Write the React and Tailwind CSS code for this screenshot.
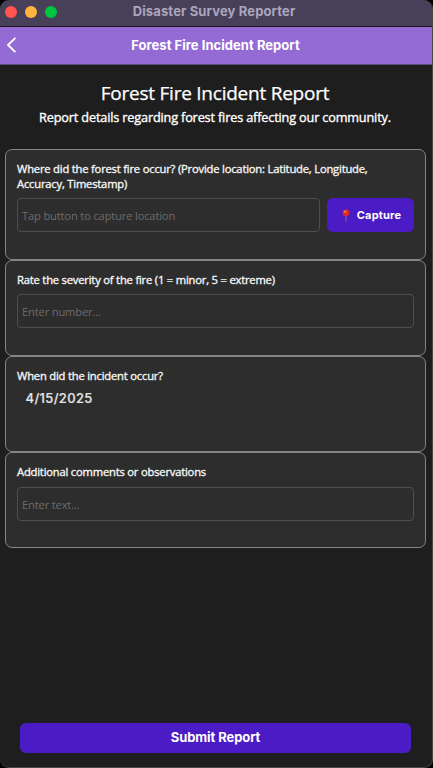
const openSans = "font-['Open_Sans',sans-serif]";
const inter = "font-['Inter',sans-serif]";

function Pin() {
  return (
    <svg className="h-[13px] w-[8px] shrink-0" viewBox="0 0 8 13" fill="none">
      <path d="M4 6v6.4" stroke="#7c6a8a" strokeWidth="1.1" />
      <circle cx="4" cy="3.8" r="3.4" fill="#d92d20" />
      <circle cx="3.2" cy="2.8" r="1.2" fill="#f5705f" />
    </svg>
  );
}

function Card({ label, height, children }) {
  return (
    <section className={`${height} shrink-0 rounded-[7px] border border-[#858585] bg-[#2d2d2d] px-[11px] pt-[11px]`}>
      <h2 className={`${openSans} text-[11.2px] leading-[15px] tracking-[-0.19px] whitespace-nowrap text-[#f5f5f5] [-webkit-text-stroke:0.35px_#f5f5f5]`}>{label}</h2>
      {children}
    </section>
  );
}

function Field({ placeholder }) {
  return (
    <div className={`${openSans} flex h-[34px] min-w-0 flex-1 items-center rounded-[4px] border border-[#4e4e4e] px-[4px] pt-[2px] text-[11.2px] tracking-[-0.18px] text-[#6c6c6c]`}>
      {placeholder}
    </div>
  );
}

export default function App() {
  return (
    <div className="h-[768px] w-[433px] overflow-hidden bg-black">
      <div className="flex h-full flex-col overflow-hidden rounded-[9px] border-r border-b border-[#484848] bg-[#1e1e1e]">
        <header className="relative flex h-[26px] shrink-0 items-center justify-center bg-[#474058] pr-[4px] pb-[2px]">
          <div className="absolute top-[6px] left-[5px] flex gap-[8px]">
            <span className="size-[12px] rounded-full bg-[#ff5450]" />
            <span className="size-[12px] rounded-full bg-[#ffb53d]" />
            <span className="size-[12px] rounded-full bg-[#00c63f]" />
          </div>
          <span className={`${inter} text-[13px] font-bold tracking-[0.14px] text-[#ada5bf]`}>Disaster Survey Reporter</span>
        </header>
        <nav className="relative flex h-[39px] shrink-0 items-center justify-center border-t border-b border-t-[#191520] border-b-[#605078] bg-[#946bd5] pr-px">
          <svg className="absolute top-[10px] left-[6px] h-[16px] w-[11px]" viewBox="0 0 11 16" fill="none">
            <path d="M8.9 1.3 2 8l6.9 6.7" stroke="white" strokeWidth="1.8" strokeLinecap="round" strokeLinejoin="round" />
          </svg>
          <span className={`${inter} text-[13px] font-bold tracking-[0.04px] text-white`}>Forest Fire Incident Report</span>
        </nav>
        <div className="flex h-[84px] shrink-0 flex-col items-center pt-[14px] pr-[2px] text-white">
          <h1 className={`${openSans} text-[19px] leading-[28px] tracking-[-0.24px] whitespace-nowrap [-webkit-text-stroke:0.25px_white]`}>Forest Fire Incident Report</h1>
          <p className={`${openSans} text-[12.7px] leading-[20px] tracking-[-0.16px] whitespace-nowrap [-webkit-text-stroke:0.35px_white]`}>Report details regarding forest fires affecting our community.</p>
        </div>
        <main className="ml-[5px] flex w-[421px] flex-col">
          <Card height="h-[111px]" label={<>Where did the forest fire occur? (Provide location: Latitude, Longitude,<br />Accuracy, Timestamp)</>}>
            <div className="mt-[7px] flex gap-[7px]">
              <Field placeholder="Tap button to capture location" />
              <button className={`${inter} flex h-[34px] w-[87px] items-center justify-center gap-[7px] rounded-[6px] bg-[#4b1bc6] pt-px pl-[2px] text-[11px] font-bold tracking-[0.2px] text-white`}>
                <Pin />
                Capture
              </button>
            </div>
          </Card>
          <Card height="h-[96px]" label="Rate the severity of the fire (1 = minor, 5 = extreme)">
            <div className="mt-[7px] flex"><Field placeholder="Enter number..." /></div>
          </Card>
          <Card height="h-[96px]" label="When did the incident occur?">
            <div className={`${inter} mt-[6px] ml-[8.5px] text-[13px] leading-[18px] font-medium tracking-[0.36px] text-[#e4e4e4] [-webkit-text-stroke:0.2px_#e4e4e4]`}>4/15/2025</div>
          </Card>
          <Card height="h-[96px]" label="Additional comments or observations">
            <div className="mt-[8px] flex"><Field placeholder="Enter text..." /></div>
          </Card>
        </main>
        <footer className="mt-auto mb-[14px] ml-[20px] w-[391px]">
          <button className={`${inter} flex h-[30px] w-full items-center justify-center rounded-[6px] bg-[#4b1bc6] pb-px text-[13px] font-bold tracking-[-0.08px] text-white`}>Submit Report</button>
        </footer>
      </div>
    </div>
  );
}
